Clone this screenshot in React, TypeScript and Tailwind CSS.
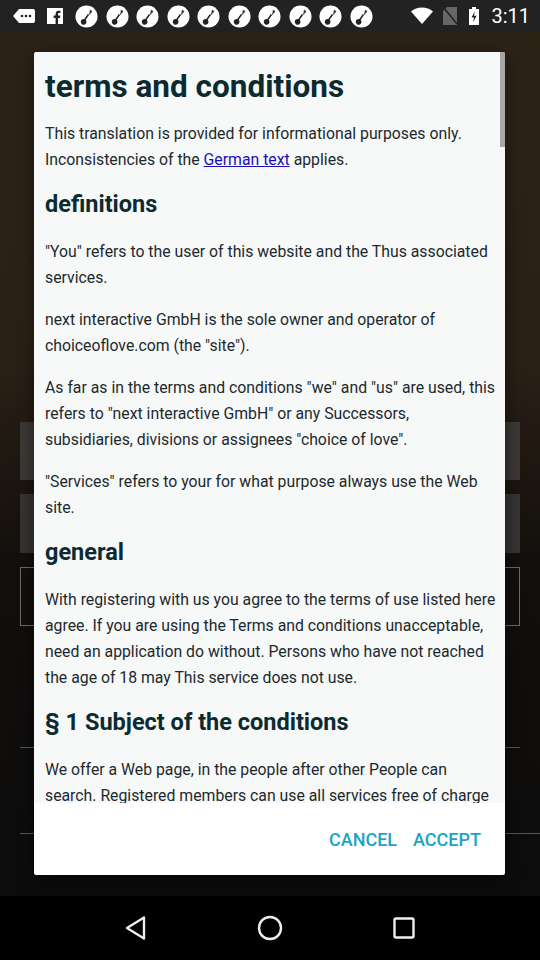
import React from 'react';

const font = { fontFamily: 'Roboto, "Noto Sans", sans-serif' };

function NoteBadge() {
  return (
    <svg width="23" height="23" viewBox="0 0 24 24">
      <circle cx="12" cy="12" r="11.5" fill="#fff" />
      <path d="M6 17.5a3 3 0 1 0 5.2-2l3.6-5.2-1.4-1-3.7 5.3A3 3 0 0 0 6 17.5z" fill="#222" />
      <path d="M14.6 9.8l1.2-3.2 1 .4-1.1 3.2z" fill="#222" />
      <path d="M16.5 4.5l.5 1.4 1.4.2-1.1.9.4 1.4-1.2-.8-1.2.8.4-1.4-1.1-.9 1.4-.2z" fill="#222" />
    </svg>
  );
}

function StatusBar() {
  return (
    <div className="h-8 bg-[#222222] flex items-center pl-[13px] pr-[10px] text-white">
      {/* overflow dots bubble */}
      <svg width="22" height="14" viewBox="0 0 22 14" className="mr-[12px]">
        <path d="M6 0h14a2 2 0 0 1 2 2v10a2 2 0 0 1-2 2H6L0 7z" fill="#fff" />
        <circle cx="9" cy="7" r="1.3" fill="#222" />
        <circle cx="13" cy="7" r="1.3" fill="#222" />
        <circle cx="17" cy="7" r="1.3" fill="#222" />
      </svg>
      <svg width="16" height="16" viewBox="0 0 16 16" className="mr-[12px]">
        <rect width="16" height="16" fill="#fff" />
        <path d="M11 16V10h2l.3-2.4H11V6.2c0-.7.2-1.2 1.2-1.2h1.2V2.9c-.2 0-1-.1-1.8-.1-1.8 0-3 1.1-3 3.1v1.7h-2V10h2v6z" fill="#222" />
      </svg>
      <div className="flex gap-[7.5px]">
        {Array.from({ length: 10 }).map((_, i) => (
          <NoteBadge key={i} />
        ))}
      </div>
      <div className="flex-1" />
      <svg width="22" height="18" viewBox="0 0 22 18" className="mr-[10px]">
        <path d="M11 17L0 4.5C3 2 6.8.5 11 .5S19 2 22 4.5z" fill="#fff" />
      </svg>
      <svg width="14" height="18" viewBox="0 0 14 18" className="mr-[12px]">
        <path d="M4 0h10v18H0V4z" fill="#666" />
        <path d="M1 1l13 16" stroke="#222" strokeWidth="1.6" />
      </svg>
      <svg width="10" height="18" viewBox="0 0 10 18" className="mr-[12px]">
        <rect x="3" y="0" width="4" height="2" fill="#fff" />
        <rect x="0" y="2" width="10" height="16" fill="#fff" />
        <path d="M6 4L2.5 10.5h2.6L4 15.5l3.6-6.8H5z" fill="#222" />
      </svg>
      <span className="text-[20px] leading-none" style={font}>3:11</span>
    </div>
  );
}

function NavBar() {
  return (
    <div className="h-16 bg-black flex items-center justify-around px-[70px]">
      <svg width="24" height="26" viewBox="0 0 24 26">
        <path d="M20 2.5v21L3 13z" fill="none" stroke="#eee" strokeWidth="2.4" strokeLinejoin="round" />
      </svg>
      <svg width="26" height="26" viewBox="0 0 26 26">
        <circle cx="13" cy="13" r="11" fill="none" stroke="#eee" strokeWidth="2.4" />
      </svg>
      <svg width="24" height="24" viewBox="0 0 24 24">
        <rect x="2.5" y="2.5" width="19" height="19" rx="1.5" fill="none" stroke="#eee" strokeWidth="2.4" />
      </svg>
    </div>
  );
}

function Backdrop() {
  return (
    <div className="flex-1 bg-[linear-gradient(180deg,#2d2216_0%,#2a2016_38%,#120f0c_62%,#0c0c0d_100%)] flex flex-col px-5">
      <div className="h-[390px]" />
      <div className="h-[58px] bg-[#3b3835]" />
      <div className="h-[14px]" />
      <div className="h-[59px] bg-[#353432]" />
      <div className="h-[14px]" />
      <div className="h-[59px] border border-[#6b6b6b]" />
      <div className="h-[121px]" />
      <div className="h-px bg-[#555]" />
      <div className="h-[85px]" />
      <div className="h-px bg-[#555] -mr-5" />
    </div>
  );
}

function Heading({ children }: { children: React.ReactNode }) {
  return <h2 className="text-[23.5px] font-bold leading-[30px] text-[#0c2b31] mt-[3px] mb-[20px]">{children}</h2>;
}

// lines are broken by hand to follow the device's wrapping
function P({ children }: { children: React.ReactNode }) {
  return <p className="text-[15.8px] leading-[26px] text-[#1c2a2e] mb-4 whitespace-nowrap">{children}</p>;
}

function Dialog() {
  return (
    <div
      className="absolute left-[34px] top-[52px] w-[471px] h-[823px] flex flex-col rounded-[2px] overflow-hidden shadow-[0_4px_16px_rgba(0,0,0,0.5)]"
      style={font}
    >
      <div className="relative flex-1 overflow-hidden bg-[#f7f8f8] pl-[11px] pr-[4px] pt-[17px]">
        <div className="absolute right-0 top-0 w-[5px] h-[95px] bg-[#a6a6a6]" />
        <h1 className="text-[31.5px] font-bold leading-[36px] text-[#0c2b31] mb-[16px]">terms and conditions</h1>
        <P>
          This translation is provided for informational purposes only.
          <br />
          Inconsistencies of the <span className="text-[#1a0dbf] underline">German text</span> applies.
        </P>
        <Heading>definitions</Heading>
        <P>
          "You" refers to the user of this website and the Thus associated
          <br />
          services.
        </P>
        <P>
          next interactive GmbH is the sole owner and operator of
          <br />
          choiceoflove.com (the "site").
        </P>
        <P>
          As far as in the terms and conditions "we" and "us" are used, this
          <br />
          refers to "next interactive GmbH" or any Successors,
          <br />
          subsidiaries, divisions or assignees "choice of love".
        </P>
        <P>
          "Services" refers to your for what purpose always use the Web
          <br />
          site.
        </P>
        <Heading>general</Heading>
        <P>
          With registering with us you agree to the terms of use listed here
          <br />
          agree. If you are using the Terms and conditions unacceptable,
          <br />
          need an application do without. Persons who have not reached
          <br />
          the age of 18 may This service does not use.
        </P>
        <Heading>§ 1 Subject of the conditions</Heading>
        <P>
          We offer a Web page, in the people after other People can
          <br />
          search. Registered members can use all services free of charge
        </P>
      </div>
      <div className="h-[72px] bg-white flex items-center justify-end gap-4 pr-6">
        <button className="text-[18px] font-medium text-[#1ba4c3] uppercase">Cancel</button>
        <button className="text-[18px] font-medium text-[#1ba4c3] uppercase">Accept</button>
      </div>
    </div>
  );
}

export default function App() {
  return (
    <div className="relative w-[540px] h-[960px] flex flex-col overflow-hidden">
      <StatusBar />
      <Backdrop />
      <NavBar />
      <Dialog />
    </div>
  );
}
